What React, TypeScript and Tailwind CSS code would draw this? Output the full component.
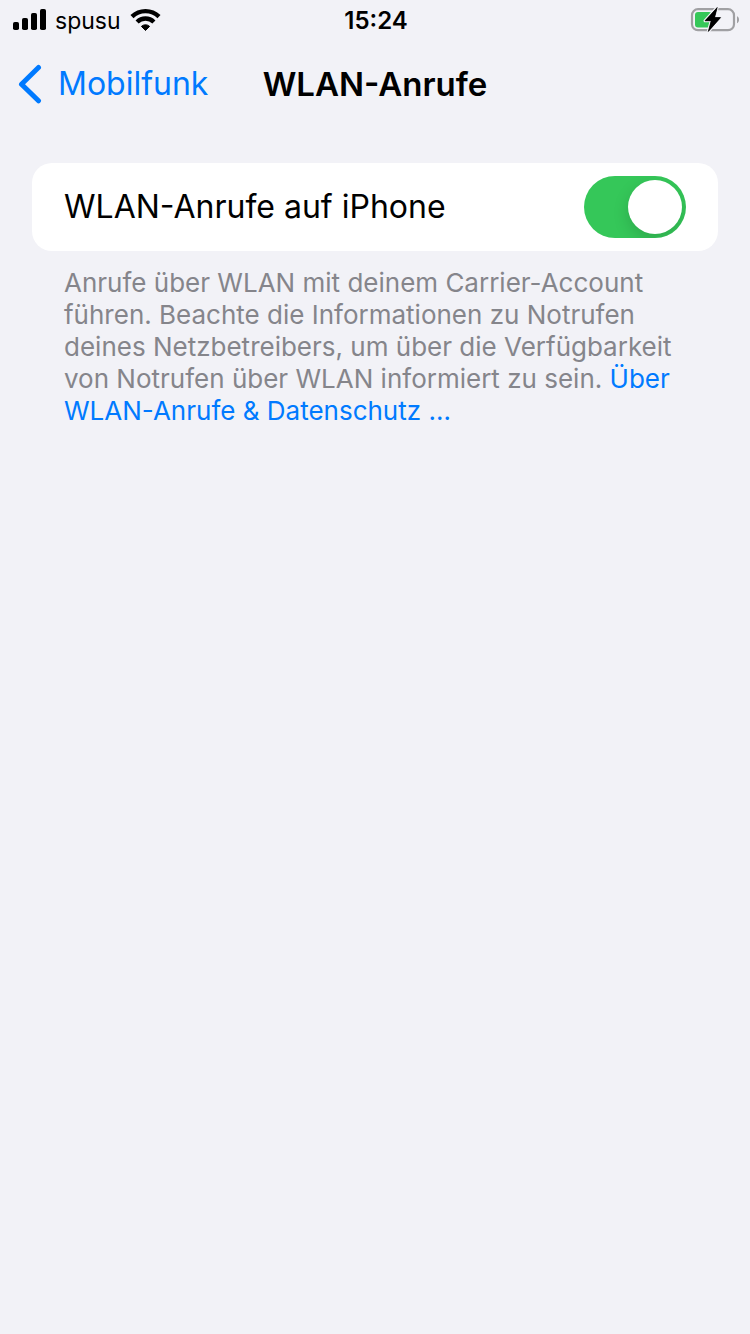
import { useState } from "react";

export default function App() {
  return (
    <div className="min-h-screen bg-[#f2f2f7] font-['Inter','Liberation_Sans',sans-serif] text-black">
      <StatusBar />
      <NavBar title="WLAN-Anrufe" back="Mobilfunk" />
      <main className="px-8 pt-[35px]">
        <WifiCalling />
      </main>
    </div>
  );
}

function StatusBar() {
  return (
    <div className="grid h-10 grid-cols-[1fr_auto_1fr] items-center pl-3 pr-[10px]">
      <div className="flex items-center gap-2">
        <SignalIcon />
        <span className="pt-px text-[23px] leading-7">spusu</span>
        <WifiIcon />
      </div>
      <span className="pt-px text-2xl leading-7 font-semibold">15:24</span>
      <div className="flex justify-end">
        <BatteryIcon />
      </div>
    </div>
  );
}

function NavBar({ title, back }: { title: string; back: string }) {
  return (
    <header className="grid h-[88px] grid-cols-[1fr_auto_1fr] items-center px-4">
      <a href="#mobilfunk" className="flex items-center gap-4 text-[32px] leading-10 text-[#007aff]">
        <svg width="26" height="40" viewBox="0 0 26 40" fill="none" aria-hidden="true">
          <path d="M22.5 3.5 5.5 20.2 22.5 36.8" stroke="currentColor" strokeWidth="5" strokeLinecap="round" strokeLinejoin="round" />
        </svg>
        {back}
      </a>
      <h1 className="text-[33px] leading-10 font-semibold">{title}</h1>
    </header>
  );
}

function WifiCalling() {
  const [enabled, setEnabled] = useState(true);

  return (
    <section>
      <div className="flex h-[88px] items-center justify-between rounded-[20px] bg-white px-8">
        <label htmlFor="wifi-calling" className="text-[32px] leading-10">
          WLAN-Anrufe auf iPhone
        </label>
        <input
          id="wifi-calling"
          type="checkbox"
          role="switch"
          checked={enabled}
          onChange={(e) => setEnabled(e.target.checked)}
          className="h-[62px] w-[102px] shrink-0 cursor-pointer appearance-none overflow-hidden rounded-full bg-[#e9e9eb] p-1 transition-colors before:block before:size-[54px] before:rounded-full before:bg-white before:shadow-[0_6px_16px_rgba(0,0,0,0.15)] before:content-[''] checked:bg-[#35c759] checked:before:ml-10"
        />
      </div>
      <p className="px-8 pt-4 text-[26px] leading-8 text-[#85858b]">
        Anrufe über WLAN mit deinem Carrier-Account führen. Beachte die Informationen zu Notrufen deines
        Netzbetreibers, um über die Verfügbarkeit von Notrufen über WLAN informiert zu sein.{" "}
        <a href="#datenschutz" className="text-[#007aff]">
          Über WLAN-Anrufe &amp; Datenschutz …
        </a>
      </p>
    </section>
  );
}

function SignalIcon() {
  return (
    <svg width="35" height="22" viewBox="0 0 35 22" aria-hidden="true">
      <rect x="1" y="13" width="6" height="8" rx="1.8" />
      <rect x="10" y="9" width="6" height="12" rx="1.8" />
      <rect x="19" y="4" width="6" height="17" rx="1.8" />
      <rect x="28" y="0" width="6" height="21" rx="1.8" />
    </svg>
  );
}

function WifiIcon() {
  return (
    <svg width="32" height="24" viewBox="0 0 32 24" fill="none" aria-hidden="true">
      <path d="M3 8.6a19.4 19.4 0 0 1 27 0" stroke="#000" strokeWidth="4.4" />
      <path d="M8.1 14a12 12 0 0 1 16.8 0" stroke="#000" strokeWidth="4.4" />
      <path d="M12.4 18.4a6 6 0 0 1 8.2 0L16.5 22.5Z" fill="#000" stroke="#000" strokeWidth="1" strokeLinejoin="round" />
    </svg>
  );
}

function BatteryIcon() {
  return (
    <svg width="50" height="26" viewBox="0 0 50 26" className="overflow-visible" aria-hidden="true">
      <rect x="2" y="2.2" width="42" height="21" rx="6" fill="none" stroke="#a0a0a3" strokeWidth="2.2" />
      <path d="M47 9.2c1.3.6 2 1.900 2 3.500s-.7 2.900-2 3.500Z" fill="#a0a0a3" />
      <rect x="5" y="5" width="17" height="15.500" rx="3" fill="#35c759" />
      <path d="M27.200.5 15 13.800h6.200L18.300 24.500 30.600 10.600h-6Z" fill="#000" stroke="#f2f2f7" strokeWidth="3" paintOrder="stroke" strokeLinejoin="round" />
      <path d="M27.200.5 15 13.800h6.200L18.300 24.500 30.600 10.600h-6Z" fill="#000" stroke="#000" strokeWidth="0.6" strokeLinejoin="round" />
    </svg>
  );
}
